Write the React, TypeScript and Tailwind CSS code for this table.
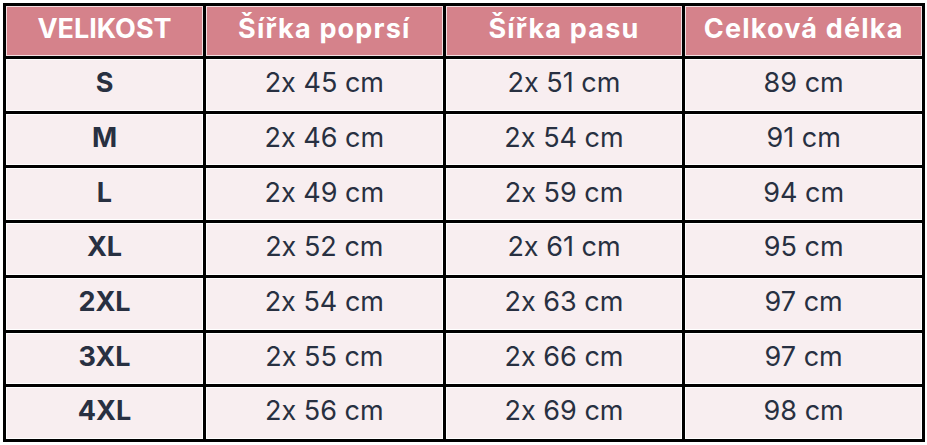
import React from 'react'

const rows = [
  ['S', '2x 45 cm', '2x 51 cm', '89 cm'],
  ['M', '2x 46 cm', '2x 54 cm', '91 cm'],
  ['L', '2x 49 cm', '2x 59 cm', '94 cm'],
  ['XL', '2x 52 cm', '2x 61 cm', '95 cm'],
  ['2XL', '2x 54 cm', '2x 63 cm', '97 cm'],
  ['3XL', '2x 55 cm', '2x 66 cm', '97 cm'],
  ['4XL', '2x 56 cm', '2x 69 cm', '98 cm'],
]

const headers = ['VELIKOST', 'Šířka poprsí', 'Šířka pasu', 'Celková délka']

export default function App() {
  return (
    <div className="min-h-screen bg-white pl-[3px] pt-[3px] font-['Inter','Noto_Sans',sans-serif] [font-feature-settings:'calt'_0]">
      {/* Size chart */}
      <div className="grid h-[439px] w-[922px] grid-cols-[197px_1fr_1fr_1fr] grid-rows-[50px_repeat(7,1fr)] gap-[3px] bg-black p-[3px]">
        {headers.map((h, i) => (
          <div
            key={h}
            className={
              'flex items-center justify-center border border-[#f3dde0] bg-[#d5828b] pb-[3px] text-[27px] font-bold text-white ' +
              (i === 0 ? 'tracking-normal' : 'tracking-[1.2px]')
            }
          >
            {h}
          </div>
        ))}
        {rows.map((row) =>
          row.map((cell, i) => (
            <div
              key={row[0] + i}
              className={
                'flex items-center justify-center border border-white bg-[#f8eef0] pb-[3px] text-[27px] text-[#283041] ' +
                (i === 0 ? 'font-bold' : 'font-normal')
              }
            >
              {cell}
            </div>
          )),
        )}
      </div>
    </div>
  )
}
